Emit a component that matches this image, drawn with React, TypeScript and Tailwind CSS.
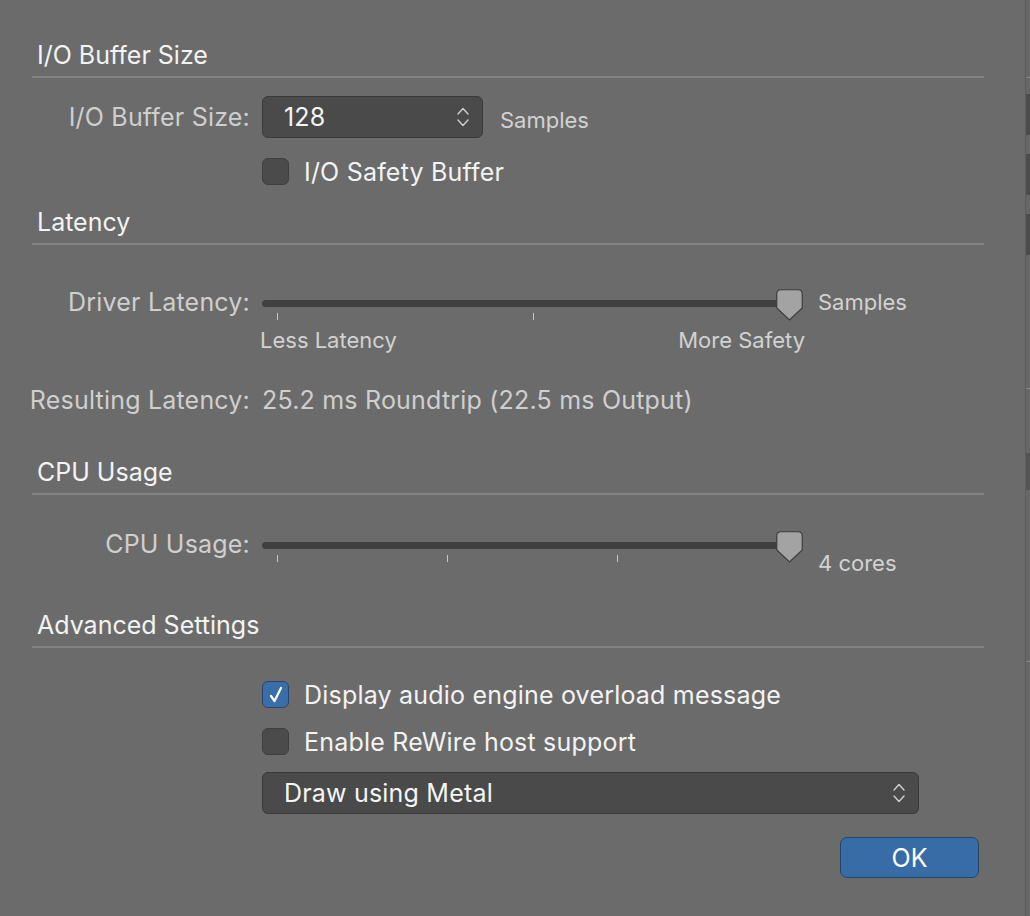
import React from "react";

const FONT = { fontFamily: 'Inter, "Noto Sans", "Liberation Sans", sans-serif' };

function Heading({ children, className = "" }: { children: React.ReactNode; className?: string }) {
  return (
    <div className={`h-[30px] pl-[37px] text-[25px] leading-[30px] text-[#f3f3f3] ${className}`}>
      {children}
    </div>
  );
}

function Divider() {
  return <div className="mt-[6px] ml-[32px] h-[2px] w-[952px] bg-[#838383]" />;
}

function Chevrons() {
  return (
    <svg width="14" height="24" viewBox="0 0 14 24" fill="none" stroke="#cfcfcf" strokeWidth="1.4" strokeLinecap="round" strokeLinejoin="round">
      <path d="M2 9 L7 3.5 L12 9" />
      <path d="M2 15 L7 20.5 L12 15" />
    </svg>
  );
}

function Checkbox({ checked = false }: { checked?: boolean }) {
  if (checked) {
    return (
      <div className="flex h-[27px] w-[27px] shrink-0 items-center justify-center rounded-[6px] border border-[#27466b] bg-[#3a6ea9]">
        <svg width="18" height="20" viewBox="0 0 18 20" fill="none" stroke="#ffffff" strokeWidth="2.2" strokeLinecap="round" strokeLinejoin="round">
          <path d="M4 11 L7.5 16 L14 3" />
        </svg>
      </div>
    );
  }
  return <div className="h-[27px] w-[27px] shrink-0 rounded-[6px] border border-[#3e3e3e] bg-[#4b4b4b]" />;
}

function Slider({ ticks }: { ticks: number[] }) {
  return (
    <div className="relative h-[34px] w-[541px]">
      <div className="absolute left-0 top-[13px] h-[7px] w-[538px] rounded-full bg-[#404040]" />
      {ticks.map((t) => (
        <div key={t} className="absolute top-[26px] h-[7px] w-[1px] bg-[#c8c8c8]" style={{ left: t }} />
      ))}
      <svg className="absolute left-[514px] top-[2px]" width="27" height="32" viewBox="0 0 27 32">
        <path
          d="M5 0.75 H22 Q26.25 0.75 26.25 5 V19 L13.5 31 L0.75 19 V5 Q0.75 0.75 5 0.75 Z"
          fill="#a3a3a3"
          stroke="#3c3c3c"
          strokeWidth="1.2"
        />
      </svg>
    </div>
  );
}

function Select({ value, width }: { value: string; width: string }) {
  return (
    <div className={`flex h-[42px] ${width} items-center justify-between rounded-[6px] border border-[#3a3a3a] bg-[#4a4a4a] pl-[21px] pr-[12px]`}>
      <span className="text-[25px] leading-[30px] tracking-[0.2px] text-[#f5f5f5]">{value}</span>
      <Chevrons />
    </div>
  );
}

function EdgeStrip() {
  return (
    <div className="flex w-[5px] flex-col border-l border-[#5c5c5c] bg-[#676767]">
      <div className="mt-[77px] h-[1px] bg-[#8a8a8a]" />
      <div className="mt-[16px] h-[41px] bg-[#4c4c4c]" />
      <div className="mt-[19px] h-[41px] bg-[#4c4c4c]" />
      <div className="mt-[19px] h-[41px] bg-[#4c4c4c]" />
      <div className="mt-[133px] h-[1px] bg-[#8a8a8a]" />
      <div className="mt-[64px] h-[37px] bg-[#555555]" />
      <div className="mt-[171px] h-[1px] bg-[#8a8a8a]" />
    </div>
  );
}

export default function App() {
  return (
    <div className="flex h-[916px] w-[1030px] overflow-hidden bg-[#6b6b6b]" style={FONT}>
      <main className="flex w-[1025px] flex-col pt-[40px]">
        <Heading>I/O Buffer Size</Heading>
        <Divider />

        <div className="mt-[18px] flex h-[42px] items-center">
          <div className="w-[250px] text-right text-[25px] leading-[30px] tracking-[0.2px] text-[#cfcfcf]">I/O Buffer Size:</div>
          <div className="ml-[12px]">
            <Select value="128" width="w-[221px]" />
          </div>
          <div className="ml-[17px] mt-[6px] text-[22px] leading-[30px] text-[#d2d2d2]">Samples</div>
        </div>

        <div className="mt-[20px] flex h-[27px] items-center pl-[262px]">
          <Checkbox />
          <span className="ml-[15px] text-[25px] leading-[30px] tracking-[0.2px] text-[#f3f3f3]">I/O Safety Buffer</span>
        </div>

        <Heading className="mt-[22px]">Latency</Heading>
        <Divider />

        <div className="mt-[42px] flex h-[34px] items-start">
          <div className="w-[250px] text-right text-[25px] leading-[30px] tracking-[0.2px] text-[#cfcfcf]">Driver Latency:</div>
          <div className="ml-[12px]">
            <Slider ticks={[15, 271]} />
          </div>
          <div className="ml-[15px] text-[22px] leading-[30px] text-[#d2d2d2]">Samples</div>
        </div>

        <div className="mt-[7px] flex h-[24px] w-[805px] items-center justify-between pl-[260px] text-[22px] leading-[24px] text-[#d2d2d2]">
          <span>Less Latency</span>
          <span>More Safety</span>
        </div>

        <div className="mt-[33px] flex h-[30px] items-center text-[25px] leading-[30px] tracking-[0.2px] text-[#cfcfcf]">
          <div className="w-[250px] text-right">Resulting Latency:</div>
          <div className="ml-[12px]">25.2 ms Roundtrip (22.5 ms Output)</div>
        </div>

        <Heading className="mt-[42px]">CPU Usage</Heading>
        <Divider />

        <div className="mt-[34px] flex h-[34px] items-start">
          <div className="w-[250px] text-right text-[25px] leading-[30px] tracking-[0.2px] text-[#cfcfcf]">CPU Usage:</div>
          <div className="ml-[12px]">
            <Slider ticks={[15, 185, 355]} />
          </div>
          <div className="ml-[15px] mt-[19px] text-[22px] leading-[30px] text-[#d2d2d2]">4 cores</div>
        </div>

        <Heading className="mt-[47px]">Advanced Settings</Heading>
        <Divider />

        <div className="mt-[33px] flex h-[27px] items-center pl-[262px]">
          <Checkbox checked />
          <span className="ml-[15px] text-[25px] leading-[30px] tracking-[0.2px] text-[#f3f3f3]">Display audio engine overload message</span>
        </div>

        <div className="mt-[20px] flex h-[27px] items-center pl-[262px]">
          <Checkbox />
          <span className="ml-[15px] text-[25px] leading-[30px] tracking-[0.2px] text-[#f3f3f3]">Enable ReWire host support</span>
        </div>

        <div className="mt-[17px] pl-[262px]">
          <Select value="Draw using Metal" width="w-[657px]" />
        </div>

        <div className="mt-[23px] pl-[840px]">
          <button className="flex h-[41px] w-[139px] items-center justify-center rounded-[7px] border border-[#23446a] bg-[#386ca7] text-[25px] leading-[30px] text-white">
            OK
          </button>
        </div>
      </main>
      <EdgeStrip />
    </div>
  );
}
